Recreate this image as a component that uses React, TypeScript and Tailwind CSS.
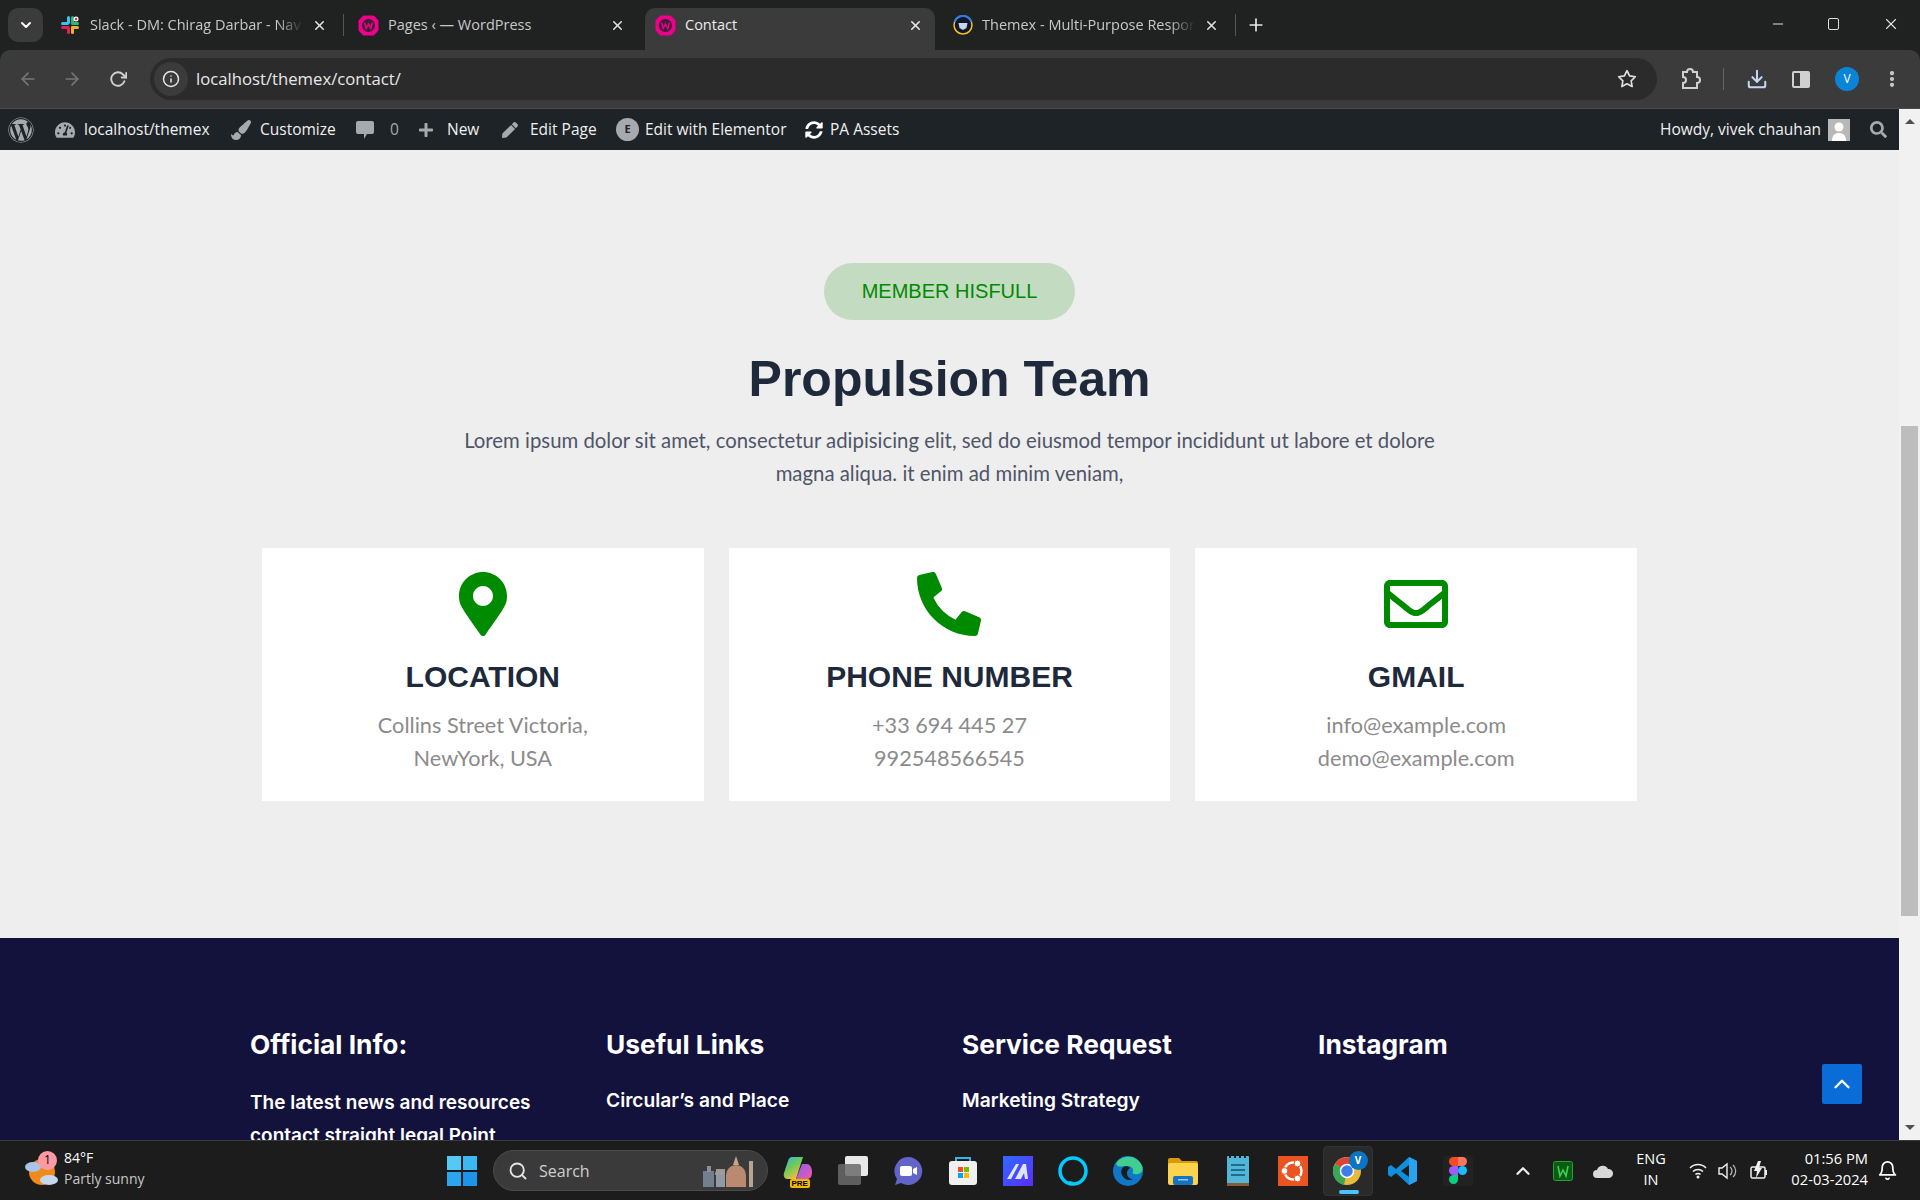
import React from 'react'
import { FaMapMarkerAlt, FaPhoneAlt, FaRegEnvelope, FaWordpress, FaTachometerAlt, FaPaintBrush, FaPlus, FaPen, FaSearch, FaSyncAlt } from 'react-icons/fa'
import { FiArrowLeft, FiArrowRight, FiRotateCw, FiInfo, FiX, FiPlus, FiMinus, FiStar, FiDownload, FiChevronUp, FiChevronDown, FiMoreVertical, FiSearch, FiBell } from 'react-icons/fi'

const WampIcon = () => (
  <svg width="21" height="21" viewBox="0 0 21 21" className="shrink-0">
    <path d="M6 .5h9a2 2 0 0 1 1.500.7l3.500 3.800a2 2 0 0 1 .5 1.300v8.400a2 2 0 0 1-.5 1.300l-3.500 3.800a2 2 0 0 1-1.500.7H6a2 2 0 0 1-1.500-.7L1 16a2 2 0 0 1-.5-1.300V6.300A2 2 0 0 1 1 5l3.500-3.800A2 2 0 0 1 6 .5z" fill="#ec008c" />
    <circle cx="10.500" cy="10.500" r="6.500" fill="#3a2030" />
    <path d="M6.500 7.500l1.700 6 2.300-4.500 2.300 4.500 1.700-6" fill="none" stroke="#ec008c" strokeWidth="1.500" />
  </svg>
)

const SlackIcon = () => (
  <svg width="20" height="20" viewBox="0 0 20 20" className="shrink-0">
    <rect x="7" y="1" width="3" height="8" rx="1.500" fill="#36c5f0" />
    <rect x="1" y="7" width="8" height="3" rx="1.500" fill="#36c5f0" />
    <rect x="11" y="1" width="3" height="8" rx="1.500" fill="#2eb67d" />
    <rect x="11" y="7" width="8" height="3" rx="1.500" fill="#2eb67d" />
    <rect x="11" y="11" width="8" height="3" rx="1.500" fill="#ecb22e" />
    <rect x="11" y="11" width="3" height="8" rx="1.500" fill="#ecb22e" />
    <rect x="1" y="11" width="8" height="3" rx="1.500" fill="#e01e5a" />
    <rect x="7" y="11" width="3" height="8" rx="1.500" fill="#e01e5a" />
    <circle cx="16" cy="4" r="2.500" fill="#fff" />
    <circle cx="16" cy="4" r="1.200" fill="#e01e5a" />
  </svg>
)

const ThemexIcon = () => (
  <svg width="20" height="20" viewBox="0 0 20 20" className="shrink-0">
    <circle cx="10" cy="10" r="9" fill="#10162f" stroke="#f5c518" strokeWidth="1.500" />
    <path d="M1.500 7A9 9 0 0 1 18.500 7" fill="none" stroke="#2f7de1" strokeWidth="2" />
    <path d="M5.500 8h9l-1 5-3.500 2-3.500-2z" fill="#c9d3ea" />
  </svg>
)

const CommentIcon = () => (
  <svg width="20" height="20" viewBox="0 0 20 20">
    <path d="M3 1h14a2 2 0 0 1 2 2v9a2 2 0 0 1-2 2h-5l-3 5v-5H3a2 2 0 0 1-2-2V3a2 2 0 0 1 2-2z" fill="#a7aaad" />
  </svg>
)

const contactCards = [
  { icon: <FaMapMarkerAlt size={64} />, title: 'LOCATION', lines: ['Collins Street Victoria,', 'NewYork, USA'] },
  { icon: <FaPhoneAlt size={64} />, title: 'PHONE NUMBER', lines: ['+33 694 445 27', '992548566545'] },
  { icon: <FaRegEnvelope size={64} />, title: 'GMAIL', lines: ['info@example.com', 'demo@example.com'] },
]

const footerCols = [
  { title: 'Useful Links', link: 'Circular’s and Place' },
  { title: 'Service Request', link: 'Marketing Strategy' },
  { title: 'Instagram', link: '' },
]

const taskbarApps = [
  {
    key: 'copilot',
    node: (
      <div className="relative h-[30px] w-[30px]">
        <svg width="30" height="26" viewBox="0 0 30 26">
          <defs>
            <linearGradient id="cp" x1="0" y1="0" x2="0.6" y2="1">
              <stop offset="0" stopColor="#2fb6e8" />
              <stop offset="0.5" stopColor="#6fc95a" />
              <stop offset="1" stopColor="#f0c03c" />
            </linearGradient>
            <linearGradient id="cp2" x1="0" y1="0" x2="1" y2="1">
              <stop offset="0" stopColor="#8a5cf0" />
              <stop offset="1" stopColor="#f05aa8" />
            </linearGradient>
          </defs>
          <path d="M9 1h11l-7 22H5c-3 0-5-2-4-6l4-12c1-3 2-4 4-4z" fill="url(#cp)" />
          <path d="M19 8h5c3 0 5 4 5 8 0 5-2 7-5 7H13z" fill="url(#cp2)" />
        </svg>
        <span className="absolute -bottom-[2px] left-[7px] rounded-[2px] bg-[#f5b800] px-[2px] font-['Liberation_Sans',sans-serif] text-[8px] leading-[9px] font-bold text-black">PRE</span>
      </div>
    ),
  },
  {
    key: 'widgets',
    node: (
      <svg width="32" height="30" viewBox="0 0 32 30">
        <rect x="8" y="0" width="23" height="20" rx="2" fill="#e8e8e8" />
        <rect x="1" y="8" width="23" height="21" rx="2" fill="#6a6a6a" fillOpacity="0.85" />
      </svg>
    ),
  },
  {
    key: 'meet',
    node: (
      <svg width="30" height="30" viewBox="0 0 30 30">
        <path d="M15 1a14 14 0 1 1-7 26l-6 2 2-6A14 14 0 0 1 15 1z" fill="#6264c7" />
        <rect x="7" y="10" width="12" height="10" rx="2" fill="#fff" />
        <path d="M20 13l4-2v8l-4-2z" fill="#fff" />
      </svg>
    ),
  },
  {
    key: 'store',
    node: (
      <svg width="30" height="30" viewBox="0 0 30 30">
        <path d="M8 6V2h14v4" fill="none" stroke="#35b5e8" strokeWidth="2" />
        <rect x="1" y="5" width="28" height="24" rx="3" fill="#f0f0f0" />
        <rect x="10" y="11" width="5" height="5" fill="#f25022" />
        <rect x="16" y="11" width="5" height="5" fill="#7fba00" />
        <rect x="10" y="17" width="5" height="5" fill="#00a4ef" />
        <rect x="16" y="17" width="5" height="5" fill="#ffb900" />
      </svg>
    ),
  },
  {
    key: 'mi',
    node: (
      <svg width="30" height="30" viewBox="0 0 30 30">
        <defs>
          <linearGradient id="mi" x1="0" y1="0" x2="1" y2="1">
            <stop offset="0" stopColor="#2f6bff" />
            <stop offset="1" stopColor="#5a2cff" />
          </linearGradient>
        </defs>
        <rect width="30" height="30" fill="url(#mi)" />
        <path d="M4 23L13 8h3L8 23zM12 23l8-15h3l2 15h-3l-1-6-3 6z" fill="#dfe4ff" />
      </svg>
    ),
  },
  {
    key: 'alexa',
    node: (
      <svg width="30" height="30" viewBox="0 0 30 30">
        <circle cx="15" cy="15" r="13" fill="none" stroke="#00caff" strokeWidth="3.500" />
        <path d="M11 25l5 1-4 4z" fill="#00caff" />
      </svg>
    ),
  },
  {
    key: 'edge',
    node: (
      <svg width="30" height="30" viewBox="0 0 30 30">
        <circle cx="15" cy="15" r="15" fill="#0f77c8" />
        <path d="M3 8C8-2 25-2 29.500 11c1.500 7-7 9-10 6 2-4-1-7-5-7C9 10 5 12 3 8z" fill="#3fcf8e" />
        <path d="M14 10c-5 0-7 5-5 9 2 5 8 6 11 4-3 0-6-2-6-6 0-2 1-4 3-5z" fill="#1c1c1c" />
      </svg>
    ),
  },
  {
    key: 'folder',
    node: (
      <svg width="30" height="28" viewBox="0 0 30 28">
        <path d="M0 3a2 2 0 0 1 2-2h9l3 3h14a2 2 0 0 1 2 2v4H0z" fill="#d99a08" />
        <rect y="6" width="30" height="22" rx="2" fill="#fbd34d" />
        <rect x="5" y="19" width="20" height="9" rx="2" fill="#1673c4" />
        <rect x="10" y="22" width="10" height="1.500" fill="#8ccbf2" />
      </svg>
    ),
  },
  {
    key: 'notes',
    node: (
      <svg width="22" height="30" viewBox="0 0 22 30">
        <rect width="22" height="28" rx="1" fill="#52b6d8" />
        <rect y="27" width="22" height="3" fill="#8a5a36" />
        <path d="M2 0h2v2H2zM7 0h2v2H7zM12 0h2v2h-2zM17 0h2v2h-2z" fill="#1c1c1c" />
        <path d="M4 8h14v2H4zM4 13h14v2H4zM4 18h14v2H4z" fill="#1f6c8c" />
      </svg>
    ),
  },
  {
    key: 'ubuntu',
    node: (
      <svg width="30" height="30" viewBox="0 0 30 30">
        <rect width="30" height="30" fill="#e95420" />
        <circle cx="15" cy="15" r="8.500" fill="none" stroke="#fff" strokeWidth="2.500" />
        <circle cx="6.500" cy="15" r="3.400" fill="#fff" stroke="#e95420" />
        <circle cx="19.500" cy="7.500" r="3.400" fill="#fff" stroke="#e95420" />
        <circle cx="19.500" cy="22.500" r="3.400" fill="#fff" stroke="#e95420" />
      </svg>
    ),
  },
  {
    key: 'chrome',
    node: (
      <div className="relative flex h-[50px] w-[50px] items-center justify-center rounded-[4px] border border-[#333] bg-[#2a2a2a]">
        <svg width="30" height="30" viewBox="0 0 30 30" className="-ml-[2px]">
          <circle cx="15" cy="15" r="14" fill="#e8b93a" />
          <path d="M15 15L3 8A14 14 0 0 1 27 8z" fill="#db4437" />
          <path d="M15 15L3 8A14 14 0 0 0 12 29z" fill="#3aa757" />
          <circle cx="15" cy="15" r="6.500" fill="#3b7ee8" stroke="#fff" strokeWidth="1.500" />
        </svg>
        <span className="absolute top-[4px] right-[4px] flex h-[19px] w-[19px] items-center justify-center rounded-full bg-[#0b74c4] text-[10px] font-bold text-white">V</span>
        <span className="absolute bottom-[1px] left-[15px] h-[4px] w-[20px] rounded-full bg-[#4cc2ff]" />
      </div>
    ),
  },
  {
    key: 'vscode',
    node: (
      <svg width="30" height="30" viewBox="0 0 30 30">
        <path d="M21 1l8 4v20l-8 4-13-12-5 4-3-2v-8l3-2 5 4z" fill="#0f8fdc" />
        <path d="M21 9v12l-8-6z" fill="#1c1c1c" />
        <path d="M21 1l8 4v20l-8 4z" fill="#2aa3ee" />
      </svg>
    ),
  },
  {
    key: 'figma',
    node: (
      <div className="flex h-[30px] w-[30px] items-center justify-center rounded-[3px] bg-[#222]">
        <svg width="18" height="27" viewBox="0 0 18 27">
          <path d="M9 0H4.500a4.500 4.500 0 0 0 0 9H9z" fill="#f24e1e" />
          <path d="M9 0h4.500a4.500 4.500 0 0 1 0 9H9z" fill="#ff7262" />
          <path d="M9 9H4.500a4.500 4.500 0 0 0 0 9H9z" fill="#a259ff" />
          <circle cx="13.500" cy="13.500" r="4.500" fill="#1abcfe" />
          <path d="M9 18H4.500A4.500 4.500 0 1 0 9 22.500z" fill="#0acf83" />
        </svg>
      </div>
    ),
  },
]

export default function App() {
  return (
    <div className="flex h-[1200px] w-full flex-col overflow-hidden bg-[#202222] font-['Open_Sans',sans-serif]">
      {/* TAB STRIP */}
      <div className="flex h-[50px] shrink-0 items-end bg-[#202222] text-[14.5px] text-[#c8c8c8]">
        <div className="mb-[8px] ml-[8px] flex h-[34px] w-[35px] items-center justify-center rounded-[10px] bg-[#3b3b3b] text-white">
          <FiChevronDown size={16} strokeWidth={3} />
        </div>
        <div className="flex h-[42px] w-[301px] items-center pb-[8px] pl-[17px]">
          <SlackIcon />
          <span className="ml-[10px] flex-1 overflow-hidden whitespace-nowrap [mask-image:linear-gradient(to_right,black_88%,transparent)]">Slack - DM: Chirag Darbar - Nav</span>
          <FiX size={15} strokeWidth={2.5} className="ml-[9px] shrink-0 text-[#e0e0e0]" />
          <span className="ml-[16px] h-[22px] w-px shrink-0 bg-[#555]" />
        </div>
        <div className="flex h-[42px] w-[301px] items-center pr-[20px] pb-[8px] pl-[14px]">
          <WampIcon />
          <span className="ml-[9px] flex-1 whitespace-nowrap">Pages ‹ — WordPress</span>
          <FiX size={15} strokeWidth={2.5} className="shrink-0 text-[#e0e0e0]" />
        </div>
        <div className="flex h-[42px] w-[290px] items-center rounded-t-[10px] bg-[#3b3b3b] pr-[12px] pb-[8px] pl-[10px] text-[#ececec]">
          <WampIcon />
          <span className="ml-[9px] flex-1">Contact</span>
          <FiX size={15} strokeWidth={2.5} className="text-[#e8e8e8]" />
        </div>
        <div className="flex h-[42px] w-[301px] items-center pb-[8px] pl-[18px]">
          <ThemexIcon />
          <span className="ml-[9px] flex-1 overflow-hidden whitespace-nowrap [mask-image:linear-gradient(to_right,black_88%,transparent)]">Themex - Multi-Purpose Respor</span>
          <FiX size={15} strokeWidth={2.5} className="ml-[9px] shrink-0 text-[#e0e0e0]" />
          <span className="ml-[16px] h-[22px] w-px shrink-0 bg-[#555]" />
        </div>
        <FiPlus size={20} className="mb-[15px] ml-[10px] text-[#e8e8e8]" strokeWidth={2} />
        <div className="mb-[17px] ml-auto flex items-center text-[#e0e0e0]">
          <FiMinus size={16} strokeWidth={1.5} />
          <span className="ml-[42px] h-[12px] w-[11px] rounded-[2px] border border-[#e0e0e0]" />
          <FiX size={18} strokeWidth={1.5} className="mr-[20px] ml-[43px]" />
        </div>
      </div>

      {/* TOOLBAR */}
      <div className="flex h-[58px] shrink-0 items-center rounded-t-[10px] bg-[#3b3b3b] text-[#d0d0d0]">
        <FiArrowLeft size={20} className="ml-[18px] text-[#777]" />
        <FiArrowRight size={20} className="ml-[24px] text-[#777]" />
        <FiRotateCw size={18} strokeWidth={2.5} className="ml-[27px] text-[#d0d0d0]" />
        <div className="ml-[23px] flex h-[42px] w-[1507px] items-center rounded-full bg-[#2b2b2b]">
          <span className="ml-[4px] flex h-[34px] w-[34px] items-center justify-center rounded-full bg-[#3b3b3b]">
            <FiInfo size={18} strokeWidth={2} className="text-[#e6e6e6]" />
          </span>
          <span className="ml-[8px] flex-1 text-[16.7px] text-[#e8e8e8]">localhost/themex/contact/</span>
          <FiStar size={20} strokeWidth={2} className="mr-[20px] text-[#e0e0e0]" />
        </div>
        <svg width="22" height="24" viewBox="0 0 22 24" className="ml-[23px]">
          <path d="M3 5h4a3 3 0 0 1 6 0h4v5a3 3 0 0 1 0 6v5H3v-5a3 3 0 0 0 0-6z" fill="none" stroke="#d0d0d0" strokeWidth="2" />
        </svg>
        <span className="ml-[21px] h-[22px] w-px bg-[#666]" />
        <FiDownload size={22} strokeWidth={2.2} className="ml-[22px] text-[#c4d8f5]" />
        <span className="ml-[24px] flex h-[17px] w-[18px] justify-end rounded-[2px] border-2 border-[#d0d0d0]">
          <span className="h-full w-[8px] bg-[#d0d0d0]" />
        </span>
        <span className="ml-[25px] flex h-[24px] w-[24px] items-center justify-center rounded-full bg-[#0a84d6] text-[12px] text-white">V</span>
        <FiMoreVertical size={20} strokeWidth={3} className="ml-[23px] text-[#d0d0d0]" />
      </div>

      {/* PAGE + SCROLLBAR */}
      <div className="relative flex min-h-0 flex-1 border-t border-[#4a4a4a]">
        <div className="min-w-0 flex-1 overflow-hidden">
          {/* WP ADMIN BAR */}
          <div className="flex h-[41px] items-center bg-[#1d2327] text-[15.5px] text-[#f0f0f1]">
            <FaWordpress size={26} className="ml-[8px] shrink-0 text-[#a7aaad]" />
            <div className="flex w-[197px] items-center gap-[9px] pl-[21px]">
              <FaTachometerAlt size={20} className="text-[#a7aaad]" />
              localhost/themex
            </div>
            <div className="flex w-[124px] items-center gap-[9px]">
              <FaPaintBrush size={20} className="text-[#a7aaad]" />
              Customize
            </div>
            <div className="flex w-[63px] items-center gap-[15px] text-[#a7aaad]">
              <CommentIcon />
              <span>0</span>
            </div>
            <div className="flex w-[84px] items-center gap-[13px]">
              <FaPlus size={16} className="text-[#a7aaad]" />
              New
            </div>
            <div className="flex w-[114px] items-center gap-[12px]">
              <FaPen size={16} className="text-[#a7aaad]" />
              Edit Page
            </div>
            <div className="flex w-[189px] items-center gap-[6px]">
              <span className="flex h-[23px] w-[23px] items-center justify-center rounded-full bg-[#a7aaad] text-[11px] font-bold text-[#1d2327]">E</span>
              Edit with Elementor
            </div>
            <div className="flex items-center gap-[7px]">
              <FaSyncAlt size={18} className="text-white" />
              PA Assets
            </div>
            <div className="ml-auto flex items-center">
              <span>Howdy, vivek chauhan</span>
              <span className="ml-[7px] flex h-[22px] w-[22px] items-end justify-center overflow-hidden bg-[#b8b8b8]">
                <svg width="16" height="20" viewBox="0 0 16 20">
                  <circle cx="8" cy="6" r="4.500" fill="#fff" />
                  <path d="M1 20c0-6 3-8 7-8s7 2 7 8z" fill="#fff" />
                </svg>
              </span>
              <FaSearch size={17} className="mr-[12px] ml-[20px] text-[#a7aaad]" />
            </div>
          </div>

          {/* TEAM SECTION */}
          <section className="flex flex-col items-center bg-[#eeeeee] pt-[113px] pb-[137px]">
            <div className="flex h-[57px] w-[251px] items-center justify-center rounded-full bg-[#c3dbc1] pb-[2px] font-['Liberation_Sans',sans-serif] text-[20px] text-[#008a00]">
              MEMBER HISFULL
            </div>
            <h2 className="mt-[30px] font-['Liberation_Sans',sans-serif] text-[50px] leading-[58px] font-bold text-[#1e293b]">
              Propulsion Team
            </h2>
            <p className="mt-[16px] w-[1000px] text-center font-['Lato',sans-serif] text-[20.35px] leading-[33px] text-[#4f5568]">
              Lorem ipsum dolor sit amet, consectetur adipisicing elit, sed do eiusmod tempor incididunt ut labore et dolore magna aliqua. it enim ad minim veniam,
            </p>
            <div className="mt-[58px] grid w-[1375px] grid-cols-3 gap-[25px]">
              {contactCards.map((card) => (
                <div key={card.title} className="flex h-[253px] flex-col items-center bg-white pt-[24px]">
                  <span className="text-[#008a00]">{card.icon}</span>
                  <h3 className="mt-[23px] font-['Liberation_Sans',sans-serif] text-[30px] leading-[36px] font-bold text-[#1e293b]">
                    {card.title}
                  </h3>
                  <div className="mt-[14px] text-center font-['Lato',sans-serif] text-[21.7px] leading-[33px] text-[#8b8b8b]">
                    {card.lines.map((line) => (
                      <div key={line}>{line}</div>
                    ))}
                  </div>
                </div>
              ))}
            </div>
          </section>

          {/* FOOTER */}
          <footer className="grid grid-cols-[356px_356px_356px_356px] bg-[#13123c] pt-[90px] pl-[250px] font-['Inter',sans-serif] text-white">
            <div>
              <h4 className="text-[26.3px] leading-[34px] font-bold">Official Info:</h4>
              <p className="mt-[24px] w-[300px] text-[19px] leading-[33px] font-semibold">
                The latest news and resources contact straight legal Point
              </p>
            </div>
            {footerCols.map((col) => (
              <div key={col.title}>
                <h4 className="text-[26.3px] leading-[34px] font-bold">{col.title}</h4>
                {col.link && <p className="mt-[22px] text-[19.2px] leading-[33px] font-semibold">{col.link}</p>}
              </div>
            ))}
          </footer>
        </div>

        {/* SCROLLBAR */}
        <div className="flex w-[21px] shrink-0 flex-col items-center bg-[#f1f1f1]">
          <span className="mt-[10px] h-0 w-0 border-x-[5px] border-b-[5px] border-x-transparent border-b-[#505050]" />
          <span className="mt-[302px] h-[490px] w-[17px] bg-[#bdbdbd]" />
          <span className="mt-auto mb-[10px] h-0 w-0 border-x-[5px] border-t-[5px] border-x-transparent border-t-[#505050]" />
        </div>

        {/* BACK TO TOP */}
        <div className="absolute top-[955px] left-[1822px] flex h-[40px] w-[40px] items-center justify-center rounded-[2px] bg-[#0a6cd6] text-white">
          <FiChevronUp size={26} strokeWidth={2.2} />
        </div>
      </div>

      {/* TASKBAR */}
      <div className="relative flex h-[60px] shrink-0 items-center border-t border-[#3a3a3a] bg-[#1c1c1c] font-['Open_Sans',sans-serif] text-[#e6e6e6]">
        <div className="relative ml-[25px] h-[34px] w-[34px]">
          <svg width="34" height="34" viewBox="0 0 34 34">
            <circle cx="17" cy="18" r="13" fill="#f08a1d" />
            <ellipse cx="8" cy="13" rx="8" ry="5" fill="#a9c4e4" />
            <ellipse cx="24" cy="26" rx="9" ry="5" fill="#c5d8ee" />
          </svg>
          <span className="absolute -top-[3px] left-[13px] flex h-[19px] w-[19px] items-center justify-center rounded-full bg-[#ff99a4] text-[12px] text-black">1</span>
        </div>
        <div className="ml-[5px] w-[100px] pb-[5px] text-[14px] leading-[21px]">
          <div className="text-white">84°F</div>
          <div className="text-[#c8c8c8]">Partly sunny</div>
        </div>
        <div className="ml-[283px] grid h-[30px] w-[30px] grid-cols-2 gap-[2px]">
          <span className="bg-[#54c9f5]" />
          <span className="bg-[#3bb8f2]" />
          <span className="bg-[#2aa6ee]" />
          <span className="bg-[#1c94ea]" />
        </div>
        <div className="ml-[16px] flex h-[41px] w-[275px] items-center rounded-full border border-[#4a4a4a] bg-[#3a3a3a]">
          <FiSearch size={20} strokeWidth={2.2} className="ml-[14px] text-[#e6e6e6]" />
          <span className="ml-[11px] flex-1 text-[16px] text-[#d0d0d0]">Search</span>
          <svg width="54" height="32" viewBox="0 0 54 32" className="mr-[11px]">
            <rect x="1" y="16" width="11" height="16" fill="#71808e" />
            <rect x="5" y="11" width="4" height="6" fill="#8d8f94" />
            <rect x="14" y="14" width="9" height="18" fill="#8e9aa6" />
            <path d="M17 14a6 6 0 0 1 6 6h-10a6 6 0 0 1 4-6z" fill="#a49a90" />
            <path d="M24 32V20a10 10 0 0 1 20 0v12z" fill="#b98a70" />
            <path d="M31 10l3-9 3 9z" fill="#c7a68e" />
            <rect x="47" y="6" width="4" height="26" fill="#b9a392" />
          </svg>
        </div>
        <div className="ml-[2px] flex items-center">
          {taskbarApps.map((app) => (
            <div key={app.key} className="flex h-[50px] w-[55px] items-center justify-center">
              {app.node}
            </div>
          ))}
        </div>
        <FiChevronUp size={22} strokeWidth={2.5} className="ml-[27px] text-[#eeeeee]" />
        <svg width="20" height="20" viewBox="0 0 20 20" className="ml-[19px]">
          <rect x="0.500" y="0.500" width="19" height="19" rx="2" fill="#0b5c12" stroke="#1ea82d" />
          <path d="M5 5l2 10 3-6 3 6 2-10" fill="none" stroke="#3dd04e" strokeWidth="1.600" />
        </svg>
        <svg width="20" height="14" viewBox="0 0 20 14" className="ml-[20px]">
          <path d="M4 14a4 4 0 0 1 0-8 6 6 0 0 1 11-1 4.500 4.500 0 0 1 1 9z" fill="#d8d8d8" />
        </svg>
        <div className="ml-[23px] w-[30px] pb-[3px] text-center text-[14.5px] leading-[21px] text-white">
          <div>ENG</div>
          <div>IN</div>
        </div>
        <svg width="18" height="16" viewBox="0 0 18 16" className="ml-[23px]">
          <path d="M1 5a11 11 0 0 1 16 0M4 8.500a7 7 0 0 1 10 0M6.500 11.500a3.500 3.500 0 0 1 5 0" fill="none" stroke="#f0f0f0" strokeWidth="1.500" />
          <circle cx="9" cy="14" r="1.500" fill="#f0f0f0" />
        </svg>
        <svg width="20" height="18" viewBox="0 0 20 18" className="ml-[11px]">
          <path d="M1 6h3l5-4v14l-5-4H1z" fill="none" stroke="#f0f0f0" strokeWidth="1.400" />
          <path d="M12 5a5 5 0 0 1 0 8M15 3a8 8 0 0 1 0 12" fill="none" stroke="#bbb" strokeWidth="1.200" />
        </svg>
        <svg width="20" height="20" viewBox="0 0 20 20" className="ml-[11px]">
          <rect x="2" y="6" width="14" height="11" rx="1.500" fill="none" stroke="#f0f0f0" strokeWidth="1.500" />
          <rect x="16" y="9" width="2" height="5" fill="#f0f0f0" />
          <path d="M9 0L5 10h3l-1 7 6-10h-3l2-7z" fill="#f0f0f0" />
        </svg>
        <div className="ml-[11px] w-[88px] pb-[3px] text-right text-[14.7px] leading-[21px] text-white">
          <div>01:56 PM</div>
          <div>02-03-2024</div>
        </div>
        <FiBell size={21} className="ml-[9px] text-white" />
      </div>
    </div>
  )
}
